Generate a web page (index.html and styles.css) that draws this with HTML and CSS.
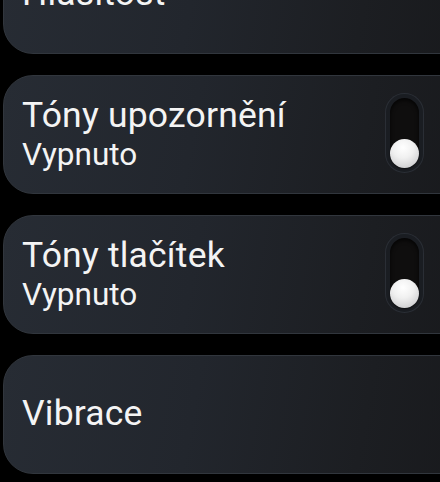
FILE: index.html
```html
<!DOCTYPE html>
<html lang="cs">
<head>
<meta charset="utf-8">
<link rel="stylesheet" href="styles.css">
</head>
<body>
<div class="list">
  <div class="card single first">
    <div class="text"><div class="title">Hlasitost</div></div>
  </div>
  <div class="card">
    <div class="text">
      <div class="title">Tóny upozornění</div>
      <div class="sub">Vypnuto</div>
    </div>
    <div class="toggle"><div class="knob"></div></div>
  </div>
  <div class="card">
    <div class="text">
      <div class="title">Tóny tlačítek</div>
      <div class="sub">Vypnuto</div>
    </div>
    <div class="toggle"><div class="knob"></div></div>
  </div>
  <div class="card single">
    <div class="text"><div class="title">Vibrace</div></div>
  </div>
</div>
</body>
</html>
```
FILE: styles.css
```css
html, body {
  margin: 0;
  padding: 0;
  background: #000;
  overflow: hidden;
  height: 482px;
}
.list {
  display: flex;
  flex-direction: column;
  gap: 21px;
  margin-top: -65px;
  padding-left: 3px;
  margin-right: -40px;
}
.card {
  box-sizing: border-box;
  height: 119px;
  border-radius: 30px;
  border: 1px solid #31363d;
  background: linear-gradient(100deg, #272c34 0%, #22262d 40%, #1c1e22 75%, #18191c 100%);
  display: flex;
  align-items: center;
  padding: 0 56px 0 18px;
  font-family: Roboto, "Noto Sans", sans-serif;
  color: #f4f4f4;
}
.text {
  flex: 1;
  align-self: flex-start;
  padding-top: 18px;
}
.single .text {
  align-self: center;
  padding-top: 0;
  margin-top: -4px;
}
.first .text {
  margin-top: -4px;
}
.title {
  font-size: 35.5px;
  line-height: 42px;
  letter-spacing: 0.2px;
  white-space: nowrap;
}
.sub {
  font-size: 31.5px;
  line-height: 38px;
  white-space: nowrap;
}
.toggle {
  box-sizing: border-box;
  width: 37px;
  height: 78px;
  border-radius: 19px;
  background: #0f0e0e;
  border: 4px solid #1a1d22;
  box-shadow: 0 0 0 1px #2a2e35, inset 0 2px 4px rgba(0,0,0,0.8);
  display: flex;
  flex-direction: column;
  justify-content: flex-end;
  align-items: center;
  margin-top: -4px;
}
.knob {
  width: 29px;
  height: 29px;
  border-radius: 50%;
  background: radial-gradient(circle at 45% 30%, #ffffff 0%, #f0f0f0 40%, #d0d0d2 80%, #b8b8ba 100%);
  box-shadow: 0 1px 2px rgba(0,0,0,0.6);
}
```
